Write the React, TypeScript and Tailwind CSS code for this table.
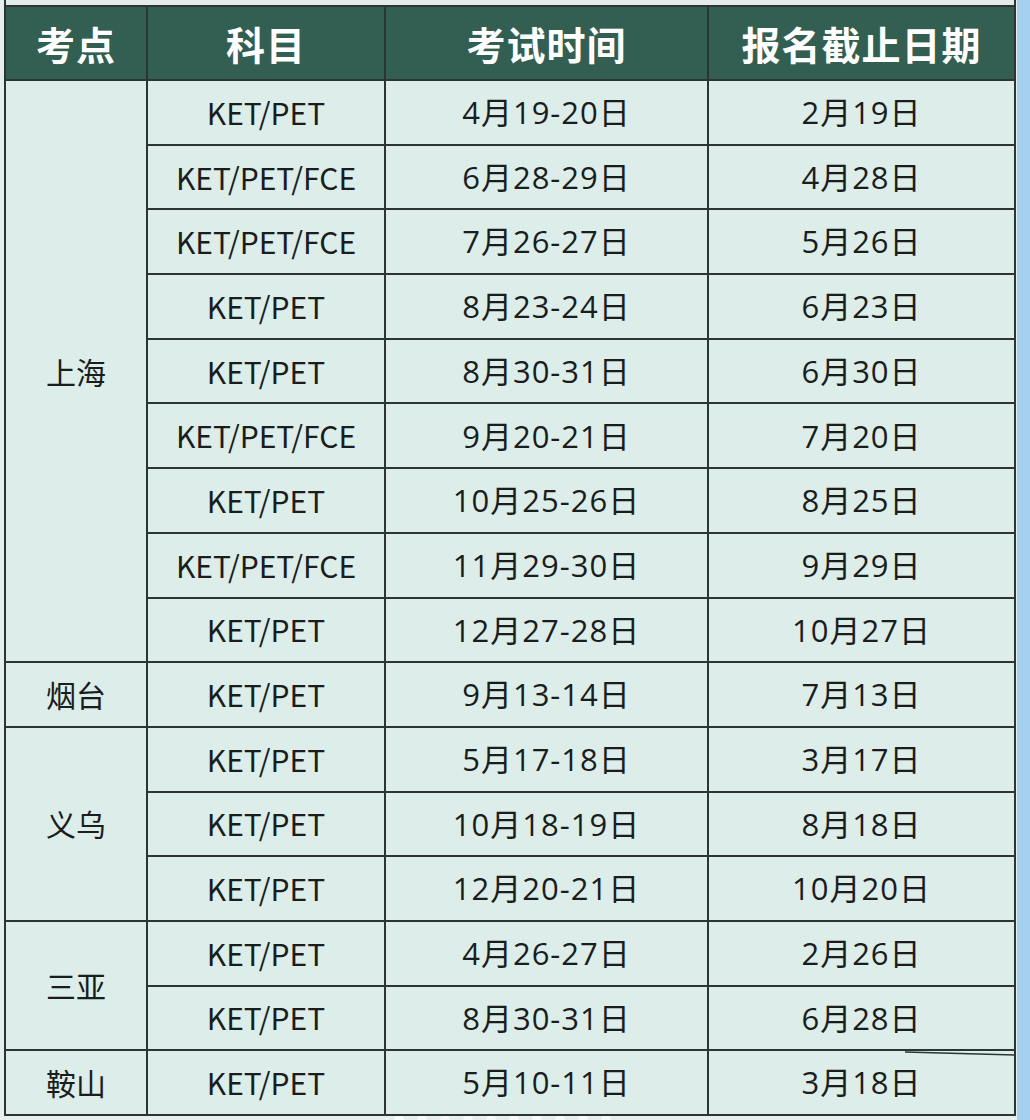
const font = { fontFamily: '"Noto Sans CJK SC", "Noto Sans", sans-serif' };
const latin = { fontFamily: '"Open Sans", "Noto Sans CJK SC", sans-serif' };

type Group = { city: string; rows: [string, string, string][] };

const groups: Group[] = [
  {
    city: "上海",
    rows: [
      ["KET/PET", "4月19-20日", "2月19日"],
      ["KET/PET/FCE", "6月28-29日", "4月28日"],
      ["KET/PET/FCE", "7月26-27日", "5月26日"],
      ["KET/PET", "8月23-24日", "6月23日"],
      ["KET/PET", "8月30-31日", "6月30日"],
      ["KET/PET/FCE", "9月20-21日", "7月20日"],
      ["KET/PET", "10月25-26日", "8月25日"],
      ["KET/PET/FCE", "11月29-30日", "9月29日"],
      ["KET/PET", "12月27-28日", "10月27日"],
    ],
  },
  { city: "烟台", rows: [["KET/PET", "9月13-14日", "7月13日"]] },
  {
    city: "义乌",
    rows: [
      ["KET/PET", "5月17-18日", "3月17日"],
      ["KET/PET", "10月18-19日", "8月18日"],
      ["KET/PET", "12月20-21日", "10月20日"],
    ],
  },
  {
    city: "三亚",
    rows: [
      ["KET/PET", "4月26-27日", "2月26日"],
      ["KET/PET", "8月30-31日", "6月28日"],
    ],
  },
  { city: "鞍山", rows: [["KET/PET", "5月10-11日", "3月18日"]] },
];

const spans: Record<number, string> = {
  1: "row-span-1",
  2: "row-span-2",
  3: "row-span-3",
  9: "row-span-9",
};

const cell = "flex items-center justify-center bg-[#dcedea] text-[30px] text-[#1a1d1c]";
const date = "flex items-center justify-center bg-[#dcedea] text-[31px] tracking-[1px] text-[#1a1d1c]";
const head = "flex items-center justify-center bg-[#325f51] text-[39px] font-bold text-white tracking-[1px]";

export default function App() {
  return (
    <div className="flex h-[1120px] w-[1030px] overflow-hidden bg-[#e6efed]" style={font}>
      <div className="relative flex w-[1017px] flex-col">
        <div className="ml-[4px] h-[5px] w-[1012px] border-x-2 border-[#2d3532] bg-[#e4ecea]" />
        <div className="ml-[4px] grid w-[1012px] grid-cols-[140px_236px_321px_305px] grid-rows-[72px_repeat(16,62.7px)] gap-[2px] bg-[#2d3532] p-[2px]">
          <div className={head}>考点</div>
          <div className={head}>科目</div>
          <div className={head}>考试时间</div>
          <div className={head}>报名截止日期</div>
          {groups.map((g) =>
            g.rows.map((r, i) => (
              <>
                {i === 0 && (
                  <div key={g.city} className={`${cell} ${spans[g.rows.length]}`}>
                    {g.city}
                  </div>
                )}
                <div className={cell}>{r[0]}</div>
                <div className={date} style={latin}>{r[1]}</div>
                <div className={date} style={latin}>{r[2]}</div>
              </>
            ))
          )}
        </div>
        <div className="ml-[394px] flex h-[4px] gap-[13px] overflow-hidden">
          {Array.from({ length: 10 }).map((_, i) => (
            <span
              key={i}
              className={`mt-[-1px] h-[10px] w-[10px] shrink-0 rounded-full ${i === 0 ? "bg-white" : "bg-white/70"}`}
            />
          ))}
        </div>
        <svg className="absolute left-0 top-0" width="1017" height="1120">
          <line x1="905" y1="1052" x2="1015" y2="1055" stroke="#2d3532" strokeWidth="1.6" />
        </svg>
      </div>
      <div className="h-full w-[13px] bg-[#a5d0ef]" />
    </div>
  );
}
